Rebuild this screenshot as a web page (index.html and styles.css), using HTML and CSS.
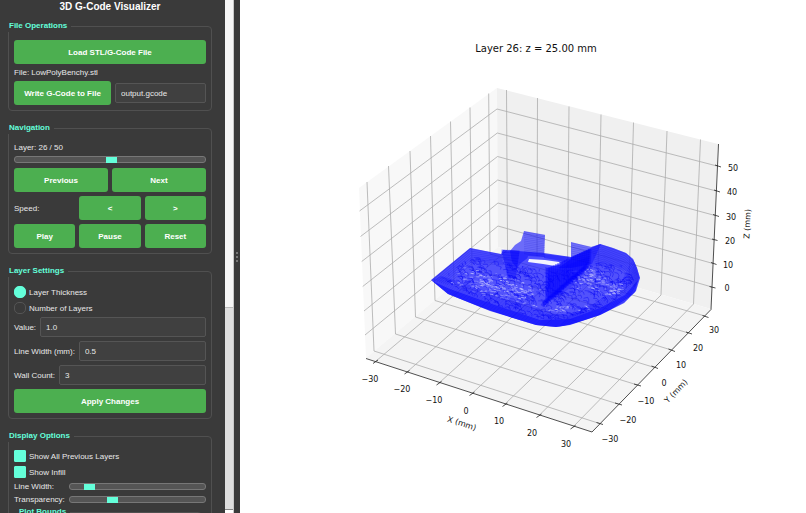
FILE: index.html
```
<!DOCTYPE html>
<html lang="en">
<head>
    <meta charset="UTF-8">
    <meta name="viewport" content="width=device-width, initial-scale=1.0">
    <title>3D G-Code Visualizer</title>
    <link rel="stylesheet" href="styles.css">
</head>
<body>

<aside class="sidebar">
    <h1>3D G-Code Visualizer</h1>

    <fieldset>
        <legend>File Operations</legend>
        <button type="button">Load STL/G-Code File</button>
        <p class="file-name">File: LowPolyBenchy.stl</p>
        <div class="row">
            <button type="button" class="write">Write G-Code to File</button>
            <input type="text" value="output.gcode" aria-label="Output file">
        </div>
    </fieldset>

    <fieldset>
        <legend>Navigation</legend>
        <label class="layer-label" for="layer">Layer: 26 / 50</label>
        <input type="range" class="layer-slider" id="layer" min="1" max="50" value="26">
        <div class="buttons two">
            <button type="button">Previous</button>
            <button type="button">Next</button>
        </div>
        <div class="buttons three">
            <span>Speed:</span>
            <button type="button">&lt;</button>
            <button type="button">&gt;</button>
            <button type="button">Play</button>
            <button type="button">Pause</button>
            <button type="button">Reset</button>
        </div>
    </fieldset>

    <fieldset>
        <legend>Layer Settings</legend>
        <label class="option"><input type="radio" name="mode" checked>Layer Thickness</label>
        <label class="option"><input type="radio" name="mode">Number of Layers</label>
        <div class="row field">
            <label for="value">Value:</label>
            <input type="text" id="value" value="1.0">
        </div>
        <div class="row field">
            <label for="lineWidthMm">Line Width (mm):</label>
            <input type="text" id="lineWidthMm" value="0.5">
        </div>
        <div class="row field">
            <label for="wallCount">Wall Count:</label>
            <input type="text" id="wallCount" value="3">
        </div>
        <button type="button">Apply Changes</button>
    </fieldset>

    <fieldset class="display">
        <legend>Display Options</legend>
        <label class="option"><input type="checkbox" checked>Show All Previous Layers</label>
        <label class="option"><input type="checkbox" checked>Show Infill</label>
        <div class="sliders">
            <label for="lineWidth">Line Width:</label>
            <input type="range" id="lineWidth" min="0" max="100" value="11">
            <label for="transparency">Transparency:</label>
            <input type="range" id="transparency" min="0" max="100" value="30">
        </div>
        <fieldset class="bounds">
            <legend>Plot Bounds</legend>
        </fieldset>
    </fieldset>
</aside>

<div class="scrollbar"><div class="thumb"></div><div class="arrow"></div></div>
<div class="splitter"><span></span></div>

<main class="plot">
    <svg viewBox="240 0 566 513" role="img" aria-label="Layer plot">
        <!-- panes -->
        <path class="pane-left" d="M359 188L497 88L498 247L366 358Z"/>
        <path class="pane-right" d="M497 88L718 144L711 309L498 247Z"/>
        <path class="pane-floor" d="M366 358L498 247L711 309L592 432Z"/>

        <g class="grid">
            <!-- x -->
            <path d="M506.5 90L507.5 250L375.5 361.5M537.5 98L537 258L407 372M569 106.5L567.5 267L439 383M601 114.5L598 276L472 393.5M633.5 122.5L629 285L504.5 404.5M667 131L661 295L539 415.5M700.5 139.5L693.5 304L573 427"/>
            <!-- y -->
            <path d="M367 182L374 351L599.5 423.5M388.5 166L395.5 334L618 404M410 151L415.5 317L637.5 385M430.5 136L435 300.5L654.5 367.5M450.5 121.5L454 284L671.5 350M470 107.5L472 269L688.5 333M488.7 93.5L490 254L705 316"/>
            <!-- z -->
            <path d="M359.5 211L497 109L717 166M360.5 236.5L497.3 133L716.3 191M361.7 261.5L497.5 156.5L715 215.5M362.7 286.5L497.7 180L714 240M364 311L498 203L713 263.5M365 335L498 226L712 287"/>
        </g>

        <g id="model"></g>

        <g class="axis">
            <path d="M366 358.5L592 432L711 309.5L718.5 144"/>
            <path d="M373 363.5L378 360M404.5 374L409.5 370.5M436.5 385L441.5 381.5M469.5 395.5L474.5 392M502.5 406.5L507.5 403M536.5 417.5L541.5 414M570.5 429L575.5 425.5"/>
            <path d="M596.5 422.5L603 424.5M615 403L622 405M634 384L641 386M651.5 366L658 368.5M668.5 349L675 351.5M686 332L692 334M702.5 315.5L708.5 317.5"/>
            <path d="M715 165L721 167M714 190L720 192M713 214.5L719 216.5M712 239L717.5 240.5M711 262.5L716.5 264.5M709.5 286.5L715.5 288"/>
        </g>

        <text class="title" x="536" y="52">Layer 26: z = 25.00 mm</text>
        <g class="ticks">
            <text x="370" y="382">−30</text>
            <text x="402" y="392">−20</text>
            <text x="434" y="403">−10</text>
            <text x="466" y="414">0</text>
            <text x="499" y="424">10</text>
            <text x="532" y="436">20</text>
            <text x="566" y="447">30</text>

            <text x="610" y="442">−30</text>
            <text x="628" y="423">−20</text>
            <text x="646" y="404">−10</text>
            <text x="664" y="386">0</text>
            <text x="681" y="368">10</text>
            <text x="698" y="351">20</text>
            <text x="714" y="333">30</text>

            <text x="733" y="171">50</text>
            <text x="732" y="195">40</text>
            <text x="731" y="220">30</text>
            <text x="730" y="244">20</text>
            <text x="728" y="268">10</text>
            <text x="727" y="291">0</text>

            <text transform="translate(461 426) rotate(18)">X (mm)</text>
            <text transform="translate(678 393) rotate(-46)">Y (mm)</text>
            <text transform="translate(750 224) rotate(-87)">Z (mm)</text>
        </g>
    </svg>
</main>

<script src="script.js"></script>
</body>
</html>
```

FILE: styles.css
```
* {
    box-sizing: border-box;
}

body {
    margin: 0;
    height: 100vh;
    display: flex;
    overflow: hidden;
    background: #fff;
    font-family: "Liberation Sans", Arial, sans-serif;
    font-size: 8px;
    color: #e8e8e8;
}

/* sidebar */
.sidebar {
    flex: 0 0 225px;
    padding: 0 13px 0 8px;
    background: #3a3a3a;
    overflow: hidden;
}

h1 {
    margin: 0 0 7px;
    font-size: 10px;
    line-height: 13px;
    text-align: center;
    color: #fff;
}

fieldset {
    margin: 0 0 11px;
    padding: 8px 5px 5px;
    border: 1px solid #505050;
    border-radius: 4px;
    min-width: 0;
}

legend {
    margin-left: -6px;
    padding: 0 4px 0 1px;
    line-height: 12px;
    font-weight: bold;
    color: #64ffda;
    background: #3a3a3a;
}

button {
    display: block;
    width: 100%;
    height: 24px;
    padding: 0;
    border: 0;
    border-radius: 3px;
    background: #4caf50;
    color: #fff;
    font: bold 8px "Liberation Sans", Arial, sans-serif;
}

input[type="text"] {
    flex: 1;
    min-width: 0;
    height: 20px;
    padding: 0 5px;
    border: 1px solid #555;
    border-radius: 2px;
    background: #404040;
    color: #e8e8e8;
    font: inherit;
}

.file-name {
    margin: 0;
    line-height: 17px;
}

.row {
    display: flex;
    align-items: center;
    gap: 4px;
}

.write {
    flex: 0 0 97px;
}

.layer-label {
    display: block;
    line-height: 11px;
}

.layer-slider {
    margin: 3px 0 5px;
}

.buttons {
    display: grid;
    gap: 4px;
    align-items: center;
}

.two {
    grid-template-columns: 1fr 1fr;
    margin-bottom: 4px;
}

.three {
    grid-template-columns: repeat(3, 1fr);
}

.option {
    display: flex;
    align-items: center;
    gap: 3px;
    height: 14px;
    margin-bottom: 2px;
}

.field {
    margin-bottom: 4px;
}

input[type="radio"],
input[type="checkbox"] {
    appearance: none;
    width: 12px;
    height: 12px;
    margin: 0;
    border: 1px solid #555;
    border-radius: 5px;
}

input[type="checkbox"] {
    border-radius: 1px;
}

input:checked {
    background: #64ffda;
    border-color: #64ffda;
}

input[type="range"] {
    appearance: none;
    display: block;
    width: 100%;
    height: 7px;
    border: 1px solid #777;
    border-radius: 3px;
    background: #555;
}

input[type="range"]::-webkit-slider-thumb {
    appearance: none;
    width: 11px;
    height: 6px;
    background: #64ffda;
}

.display {
    padding-top: 7px;
}

.sliders {
    display: grid;
    grid-template-columns: auto 1fr;
    gap: 2px 4px;
    align-items: center;
    line-height: 11px;
}

.sliders input {
    margin: 0;
}

.bounds {
    margin: 1px 4px 0;
    height: 60px;
}

.bounds legend {
    margin-left: -6px;
}

/* scroll bar and splitter */
.scrollbar {
    flex: 0 0 9px;
    display: flex;
    flex-direction: column;
    background: #dedede;
    border-right: 1px solid #c8c8c8;
}

.thumb {
    flex: 0 0 60%;
    background: #f6f6f6;
    border-bottom: 1px solid #bbb;
}

.arrow {
    height: 4px;
    margin-top: auto;
    background: #fff;
    border-top: 1px solid #888;
}

.splitter {
    flex: 0 0 6px;
    display: flex;
    align-items: center;
    justify-content: center;
    background: #3a3a3a;
}

.splitter span {
    height: 10px;
    border-left: 2px dotted #777;
}

/* plot */
.plot {
    flex: 1;
    min-width: 0;
}

.plot svg {
    display: block;
    width: 100%;
    height: 100%;
}

.pane-left {
    fill: #f8f8f8;
}

.pane-right {
    fill: #f0f0f0;
}

.pane-floor {
    fill: #f4f4f4;
}

.grid path {
    fill: none;
    stroke: #acacac;
    stroke-width: 0.8;
}

.axis path {
    fill: none;
    stroke: #222;
    stroke-width: 0.8;
}

.title,
.ticks text {
    font-family: "DejaVu Sans", sans-serif;
    font-size: 8px;
    fill: #111;
    text-anchor: middle;
}

.title {
    font-size: 10px;
}
```

FILE: script.js
```
const NS = "http://www.w3.org/2000/svg";
const model = document.getElementById("model");

function add(d, fill, stroke, width, parent) {
    const p = document.createElementNS(NS, "path");
    p.setAttribute("d", d);
    p.setAttribute("fill", fill || "none");
    if (stroke) {
        p.setAttribute("stroke", stroke);
        p.setAttribute("stroke-width", width);
    }
    (parent || model).appendChild(p);
    return p;
}

// repeatable random numbers, so the infill is the same on each load
let seed = 7;
function rand() {
    seed = (seed * 16807) % 2147483647;
    return seed / 2147483647;
}

function clipGroup(id, d) {
    const clip = document.createElementNS(NS, "clipPath");
    clip.id = id;
    add(d, "#000", null, 0, clip);
    model.appendChild(clip);
    const g = document.createElementNS(NS, "g");
    g.setAttribute("clip-path", "url(#" + id + ")");
    model.appendChild(g);
    return g;
}

const hull = "M431 280L470 248L501 254L503 250L544 253L571 257L600 244L613 248L626 253L633 259L637 268L640 278L636 291L624 303L600 315L570 325L556 327L536 325L490 311L448 294Z";
const deck = "M440 279L472 256L503 262L530 268L556 271L583 268L600 262L628 266L634 280L622 296L597 309L562 320L535 318L485 302Z";

// hull shell
add(hull, "rgba(20,20,255,0.72)");
const shell = clipGroup("shell", hull);
for (let i = 0; i < 13; i++) {
    add("M" + (431 + i * 0.8) + " " + (281 - i * 0.4) + "L" + (450 + i) + " " + (295 - i) + "L" + (536 + i) + " " + (326 - i) + "L" + (558 + i) + " " + (327 - i) + "L" + (602 - i * 0.5) + " " + (315 - i) + "L" + (626 - i) + " " + (302 - i) + "L" + (640 - i * 1.2) + " 277L" + (633 - i) + " " + (258 + i * 2),
        null, "rgba(0,0,255,0.3)", 1, shell);
}
add("M432 281L450 289L495 305L540 320L570 319L600 308L625 295L638 280L635 293L600 317L557 328L535 326L448 296Z", "rgba(0,0,255,0.5)", null, 0, shell);

// infill seen through the deck
const infill = clipGroup("infill", deck);
for (let i = 0; i < 620; i++) {
    add("M" + (436 + rand() * 197) + " " + (257 + rand() * 62) + "l" + (2 + rand() * 3) + " " + (rand() * 2 - 1) + "l" + (rand() * 3) + " " + (1 + rand() * 2) + "l" + (rand() * 2 - 1) + " " + (1 + rand() * 2),
        null, "rgba(0,0,245,0.5)", 0.8, infill);
}

// gaps between the infill lines, densest along the middle of the deck
function gaps(count, cx, cy, w, h, slope) {
    for (let i = 0; i < count; i++) {
        const dx = (rand() + rand() - 1) * w;
        const x = cx + dx;
        const y = cy + dx * slope + (rand() + rand() - 1) * h;
        add("M" + x + " " + y + "l" + (1 + rand() * 2.5) + " " + (rand() - 0.4) + "l" + rand() + " " + rand(),
            null, "rgba(205,205,255," + (0.25 + rand() * 0.5) + ")", 0.9, infill);
    }
}
gaps(190, 495, 286, 48, 14, 0.25);
gaps(80, 590, 280, 22, 12, 0.15);
gaps(35, 611, 290, 12, 6, -0.2);
gaps(30, 560, 308, 36, 5, 0);

// stern slope, stacked layers
add("M433 279L471 248L502 255L502 264L470 260L448 281Z", "rgba(60,60,255,0.35)");
for (let i = 0; i < 8; i++) {
    add("M" + (433 + i * 2) + " " + (280 + i * 0.7) + "L" + (470 + i * 0.4) + " " + (249 + i * 2) + "L503 " + (255 + i * 1.4),
        null, "rgba(0,0,220,0.3)", 0.6);
}

// cabin front and posts
add("M510 251L515 245L521 241L524 231L545 235L544 258L529 257L521 263L517 268L512 262Z", "rgba(20,20,255,0.6)");
for (let i = 0; i < 11; i++) {
    add("M" + (501.5 + i * 0.6) + " " + (251 + i * 2.5) + "l" + (18 - i) + " " + (1 + i * 0.1), null, "rgba(0,0,250,0.45)", 3);
}
for (let i = 0; i < 13; i++) {
    const y = 232 + i * 1.8;
    add("M524 " + y + "L545 " + (y + 3), null, "rgba(0,0,200,0.3)", 0.5);
}

// opening behind the cabin
add("M528 256L545 257L563 260L568 263L558 269L545 268L526 264Z", "#5050ff");
add("M529 259L545 260L559 262L561 264L555 266L543 264L528 262Z", "#f4f4ff");
add("M544 254L570 257L565 262L556 260L544 258Z", "rgba(0,0,255,0.4)");

// cabin rear block, a band of stacked walls running down to the deck
add("M571 242L591 247L601 244L592 264L571 268L558 268L571 259Z", "rgba(10,10,255,0.55)");
for (let i = 0; i < 20; i++) {
    add("M" + (590 - i * 2.2) + " " + (249 + i * 1) + "l-1 " + (14 + i * 0.9) + "l-5 7", null, "rgba(0,0,255,0.4)", 4);
}
add("M545 267L558 269L575 262L590 256L585 272L570 288L556 298L546 297Z", "rgba(0,0,255,0.25)");
for (let i = 0; i < 9; i++) {
    add("M571 " + (243 + i * 2) + "l20 4", null, "rgba(0,0,210,0.3)", 0.5);
}

// bow layers
add("M591 247L600 244L613 248L626 253L633 259L637 268L639 276L629 272L611 265L590 266Z", "rgba(50,50,255,0.35)");
for (let i = 0; i < 10; i++) {
    add("M" + (591 + i * 0.5) + " " + (248 + i * 2) + "L" + (601 + i * 0.4) + " " + (245 + i * 2) + "L" + (626 - i * 0.4) + " " + (254 + i * 2) + "L" + (634 - i * 0.4) + " " + (262 + i * 2) + "L" + (639 - i * 0.5) + " " + (278 + i),
        null, "rgba(0,0,220,0.28)", 0.6);
}
```
